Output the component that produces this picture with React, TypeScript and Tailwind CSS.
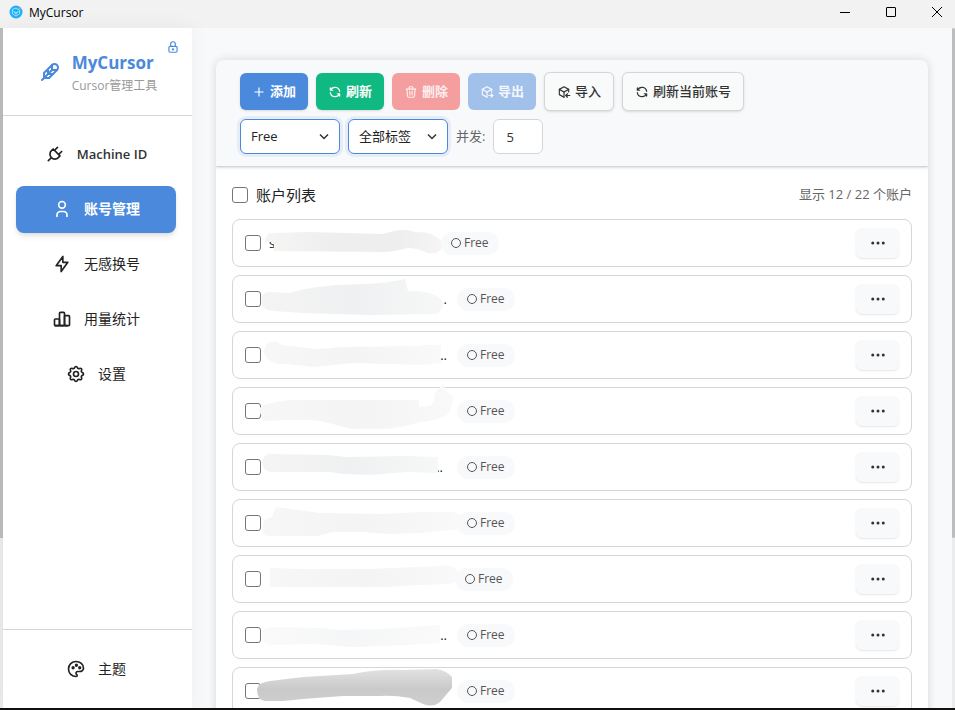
import { useState } from "react";
import type { ReactNode } from "react";
import {
  TbBolt,
  TbChartBar,
  TbDots,
  TbFeather,
  TbLock,
  TbPackageExport,
  TbPackageImport,
  TbPalette,
  TbPlug,
  TbPlus,
  TbRefresh,
  TbSettings,
  TbTrash,
  TbUser,
} from "react-icons/tb";

type Account = {
  text: string;
  align: string;
  width: string;
  mask: string;
  tone: string;
};

const accounts: Account[] = [
  {
    text: "s",
    align: "text-left",
    width: "w-[164px]",
    tone: "warm",
    mask: "M32 22Q32 13 40 13L77 12L150 14Q170 7 182 12Q195 12 200 15Q210 19 209 27Q206 35 195 33Q185 28 174 28Q160 32 150 32L41 31L41 22Z",
  },
  {
    text: ".",
    align: "text-right pr-0.5",
    width: "w-[180px]",
    tone: "cool",
    mask: "M28 22Q30 16 36 16L57 17Q70 12 104 9L134 8Q155 7 172 3L175 15Q190 15 196 17Q209 21 210 27Q210 36 202 38L137 39L70 37L40 35Q30 34 29 29Z",
  },
  {
    text: "..",
    align: "text-right pr-0.5",
    width: "w-[180px]",
    tone: "fade",
    mask: "M31 20Q32 9 40 10Q44 8 49 13L84 17L110 15L187 14L190 13L208 13V31L190 33L120 31L80 35L54 32Q34 33 31 20Z",
  },
  {
    text: "˙",
    align: "text-right pr-5",
    width: "w-[180px]",
    tone: "fade",
    mask: "M26 22Q26 15 59 12H186V19L197 18Q202 14 202 5Q208 -2 210 -4L213 3L220 9Q219 23 214 27Q200 34 187 34Q165 41 147 41H120L87 33Q70 31 54 32L30 33Z",
  },
  {
    text: "..",
    align: "text-right pr-1.5",
    width: "w-[180px]",
    tone: "cool",
    mask: "M29 19Q30 10 38 10L94 11L114 13L174 12L205 13V29L174 28L137 31L110 30L97 28H38Q30 27 29 19Z",
  },
  {
    text: "",
    align: "text-right",
    width: "w-[180px]",
    tone: "fade",
    mask: "M30 25Q31 18 39 17L43 7L87 13L147 14L187 12H220Q230 14 230 22Q229 29 218 30L187 33L154 34L130 32H100L84 36H34Q28 34 30 25Z",
  },
  {
    text: "",
    align: "text-right",
    width: "w-[178px]",
    tone: "fade",
    mask: "M37 12L67 13H137L207 10Q220 7 225 16Q226 25 218 28L187 29L154 31H37Z",
  },
  {
    text: "..",
    align: "text-right pr-0.5",
    width: "w-[180px]",
    tone: "pale",
    mask: "M28 22Q30 15 38 15L90 16L104 18L147 17L207 13V31L174 33L120 35L80 32L38 33Q29 31 28 22Z",
  },
  {
    text: "",
    align: "text-right",
    width: "w-[180px]",
    tone: "dark",
    mask: "M24 21Q26 14 37 13L70 9L120 6Q145 1 170 2L204 1Q214 3 219 9V20L207 34Q200 40 190 36L177 30Q160 27 147 28H110L70 31L50 33H32Q24 32 24 21Z",
  },
];

function MaskTones() {
  return (
    <svg className="absolute size-0" aria-hidden="true">
      <defs>
        <linearGradient id="warm">
          <stop offset="0" stopColor="#f5f5f4" />
          <stop offset="0.4" stopColor="#eeeeee" />
          <stop offset="0.75" stopColor="#efeeee" />
          <stop offset="1" stopColor="#f6f4f4" />
        </linearGradient>
        <linearGradient id="cool">
          <stop offset="0" stopColor="#f4f4f4" />
          <stop offset="0.5" stopColor="#eff0f1" />
          <stop offset="1" stopColor="#f6f7f7" />
        </linearGradient>
        <linearGradient id="fade">
          <stop offset="0" stopColor="#f7f7f7" />
          <stop offset="0.5" stopColor="#f4f4f4" />
          <stop offset="1" stopColor="#f9f9f9" />
        </linearGradient>
        <linearGradient id="pale">
          <stop offset="0" stopColor="#fafaf9" />
          <stop offset="0.5" stopColor="#f5f6f7" />
          <stop offset="1" stopColor="#fafafa" />
        </linearGradient>
        <linearGradient id="dark" x1="0" y1="0" x2="0" y2="1">
          <stop offset="0" stopColor="#e2e2e2" />
          <stop offset="0.55" stopColor="#c9c9ca" />
          <stop offset="1" stopColor="#cfcfcf" />
        </linearGradient>
      </defs>
    </svg>
  );
}

function NavItem({
  icon,
  label,
  active,
  latin,
  onClick,
}: {
  icon: ReactNode;
  label: string;
  active?: boolean;
  latin?: boolean;
  onClick?: () => void;
}) {
  const tone = active
    ? "bg-[#4a89dc] font-bold text-white shadow-md"
    : "text-[#222222]";
  return (
    <button
      type="button"
      onClick={onClick}
      className={`flex h-[47px] w-full items-center justify-center gap-3 rounded-lg pb-px text-sm ${tone}`}
    >
      {icon}
      <span className={latin ? "text-[13px] font-semibold text-[#333333]" : ""}>{label}</span>
    </button>
  );
}

function ToolButton({
  icon,
  label,
  tone,
  disabled,
}: {
  icon: ReactNode;
  label: string;
  tone: string;
  disabled?: boolean;
}) {
  return (
    <button
      type="button"
      disabled={disabled}
      className={`flex items-center gap-1 rounded-md px-3 text-[13px] ${tone}`}
    >
      {icon}
      <span>{label}</span>
    </button>
  );
}

const outlined =
  "h-[39px] border border-[#d5d6d8] bg-[#f9fafa] font-medium text-[#333333] shadow-sm";

function Picker({ label, options }: { label: string; options: string[] }) {
  return (
    <div className="relative">
      <select
        aria-label={label}
        className="h-[35px] w-[100px] appearance-none rounded-md border border-[#4a89dc] bg-white pl-[10px] text-[13px] text-[#222222] ring-3 ring-[#4a89dc]/10 outline-none"
      >
        {options.map((o) => (
          <option key={o}>{o}</option>
        ))}
      </select>
      <svg
        className="pointer-events-none absolute top-3 right-2.5 size-3"
        viewBox="0 0 12 12"
        fill="none"
        stroke="#333333"
        strokeWidth="1.5"
        aria-hidden="true"
      >
        <path d="M2 3.5 6 7.5 10 3.5" />
      </svg>
    </div>
  );
}

function AccountRow({ account, index }: { account: Account; index: number }) {
  return (
    <li className="relative flex h-12 items-center gap-2 rounded-lg border border-[#d5d6d8] bg-white px-3">
      <input
        type="checkbox"
        aria-label={`账户 ${index + 1}`}
        className="size-4 shrink-0 appearance-none rounded-[3px] border border-[#767676] bg-white"
      />
      <span className={`h-5 shrink-0 text-[13px] leading-5 font-medium text-[#222222] ${account.width} ${account.align}`}>
        {account.text}
      </span>
      <svg
        className="pointer-events-none absolute top-0 left-0 h-[46px] w-[240px] overflow-visible"
        viewBox="0 0 240 46"
        aria-hidden="true"
      >
        <path d={account.mask} fill={`url(#${account.tone})`} />
      </svg>
      <span className="z-1 flex h-[23px] items-center gap-[3px] rounded-full bg-[#f8f9fb] px-2.5 text-xs font-medium text-[#555555]">
        <span className="size-2.5 rounded-full border border-[#555555]" />
        Free
      </span>
      <button
        type="button"
        aria-label="更多"
        className="ml-auto flex h-[30px] w-[43px] items-center justify-center rounded-md bg-[#f8f9fb] text-[#333333] shadow-[0_1px_2px_rgba(0,0,0,0.1)]"
      >
        <TbDots size={18} />
      </button>
    </li>
  );
}

export default function App() {
  const [page, setPage] = useState("accounts");
  const items = [
    { id: "machine", label: "Machine ID", latin: true, icon: <TbPlug size={20} /> },
    { id: "accounts", label: "账号管理", icon: <TbUser size={20} /> },
    { id: "switch", label: "无感换号", icon: <TbBolt size={20} /> },
    { id: "usage", label: "用量统计", icon: <TbChartBar size={20} /> },
    { id: "settings", label: "设置", icon: <TbSettings size={20} /> },
  ];

  return (
    <div className="flex h-screen flex-col overflow-hidden border-b-2 border-[#111111] bg-[#f8f9fb] font-['Open_Sans','Noto_Sans_CJK_SC',sans-serif] text-[#333333]">
      <MaskTones />
      <header className="flex h-7 shrink-0 items-center bg-[#f2f2f2] pb-1 pl-[9px]">
        <svg className="size-[14px]" viewBox="0 0 14 14" fill="none" aria-hidden="true">
          <circle cx="7" cy="7" r="6.5" fill="#1eb0fa" />
          <path d="M3.2 4.6 7 3l3.6 2.4v3.4L7 11 3.6 9Z" stroke="#9be3ff" strokeWidth="1" />
          <path d="M4.5 6.5 7 8l2.5-1.5M7 8v1.5" stroke="#d8f4ff" strokeWidth="0.9" />
          <circle cx="10.6" cy="3.6" r="1" fill="#c5b45a" />
        </svg>
        <span className="ml-1.5 pt-0.5 text-xs text-black">MyCursor</span>
        <div className="ml-auto flex gap-[10px] text-black">
          <button type="button" aria-label="最小化" className="flex h-6 w-9 items-center justify-center">
            <svg className="size-[10px]" viewBox="0 0 10 10" stroke="currentColor" aria-hidden="true">
              <path d="M0 5.5H10" />
            </svg>
          </button>
          <button type="button" aria-label="最大化" className="flex h-6 w-9 items-center justify-center">
            <svg className="size-[10px]" viewBox="0 0 10 10" fill="none" stroke="currentColor" aria-hidden="true">
              <rect x="0.5" y="0.5" width="9" height="9" rx="0.5" />
            </svg>
          </button>
          <button type="button" aria-label="关闭" className="flex h-6 w-9 items-center justify-center">
            <svg className="size-[10px]" viewBox="0 0 10 10" stroke="currentColor" aria-hidden="true">
              <path d="M0 0 10 10M10 0 0 10" />
            </svg>
          </button>
        </div>
      </header>

      <div className="flex min-h-0 flex-1">
        <div className="w-[3px] shrink-0 bg-[#ebecee]">
          <div className="h-3/4 bg-[#bdbdbd]" />
        </div>
        <aside className="z-10 flex w-[189px] shrink-0 flex-col bg-white shadow-[0_0_20px_rgba(0,0,0,0.05)]">
          <div className="relative flex h-22 shrink-0 items-center justify-center gap-[10px] border-b border-[#d5d6d8]">
            <TbFeather size={24} className="text-[#4a89dc]" />
            <div className="pt-0.5">
              <h1 className="text-[17px] leading-[26px] font-bold text-[#4a89dc]">MyCursor</h1>
              <p className="text-xs leading-5 text-[#999999]">Cursor管理工具</p>
            </div>
            <button type="button" aria-label="锁定" className="absolute top-3 right-3 text-[#4a89dc]">
              <TbLock size={14} />
            </button>
          </div>
          <nav className="flex flex-1 flex-col gap-2 pt-[15px] pr-4 pl-[13px]">
            {items.map((item) => (
              <NavItem
                key={item.id}
                icon={item.icon}
                label={item.label}
                latin={item.latin}
                active={page === item.id}
                onClick={() => setPage(item.id)}
              />
            ))}
          </nav>
          <div className="shrink-0 border-t border-[#d5d6d8] pt-4 pr-4 pb-[15px] pl-[13px]">
            <NavItem icon={<TbPalette size={20} />} label="主题" />
          </div>
        </aside>

        <main className="min-w-0 flex-1 overflow-hidden px-6 pt-8">
          <section className="overflow-hidden rounded-lg bg-white shadow-[0_0_10px_rgba(0,0,0,0.14)]">
            <div className="border-b border-[#d5d6d8] bg-[#f8f9fb] px-6 py-3 shadow-sm">
              <div className="flex flex-wrap items-center gap-2">
                <ToolButton icon={<TbPlus size={14} />} label="添加" tone="h-[37px] bg-[#4a89dc] font-bold text-white shadow-sm" />
                <ToolButton icon={<TbRefresh size={14} />} label="刷新" tone="h-[37px] bg-[#10b981] font-bold text-white shadow-sm" />
                <ToolButton icon={<TbTrash size={14} />} label="删除" tone="h-[37px] bg-[#f49e9f] font-bold text-[#fdeeee]" disabled />
                <ToolButton icon={<TbPackageExport size={14} />} label="导出" tone="h-[37px] bg-[#a1c0ea] font-bold text-[#f3f7fd]" disabled />
                <ToolButton icon={<TbPackageImport size={14} />} label="导入" tone={outlined} />
                <ToolButton icon={<TbRefresh size={14} />} label="刷新当前账号" tone={outlined} />
              </div>
              <div className="mt-2 flex items-center gap-2">
                <Picker label="订阅类型" options={["Free", "Pro"]} />
                <Picker label="标签" options={["全部标签"]} />
                <label htmlFor="concurrency" className="text-[13px] text-[#666666]">
                  并发:
                </label>
                <input
                  id="concurrency"
                  inputMode="numeric"
                  defaultValue="5"
                  className="h-[35px] w-[50px] rounded-md border border-[#d5d6d8] bg-white px-3 text-[13px] text-[#333333]"
                />
              </div>
            </div>

            <div className="p-4">
              <div className="mb-3 flex h-6 items-center justify-between">
                <label className="flex items-center gap-2 text-[15px] text-[#222222]">
                  <input
                    type="checkbox"
                    className="size-4 appearance-none rounded-[3px] border border-[#767676] bg-white"
                  />
                  账户列表
                </label>
                <span className="text-[13px] text-[#666666]">显示 12 / 22 个账户</span>
              </div>
              <ul className="flex flex-col gap-2">
                {accounts.map((account, i) => (
                  <AccountRow key={i} account={account} index={i} />
                ))}
              </ul>
            </div>
          </section>
        </main>

        <div className="w-[3px] shrink-0 bg-[#ebecee]">
          <div className="h-3/4 rounded-sm bg-[#bdbdbd]" />
        </div>
      </div>
    </div>
  );
}
